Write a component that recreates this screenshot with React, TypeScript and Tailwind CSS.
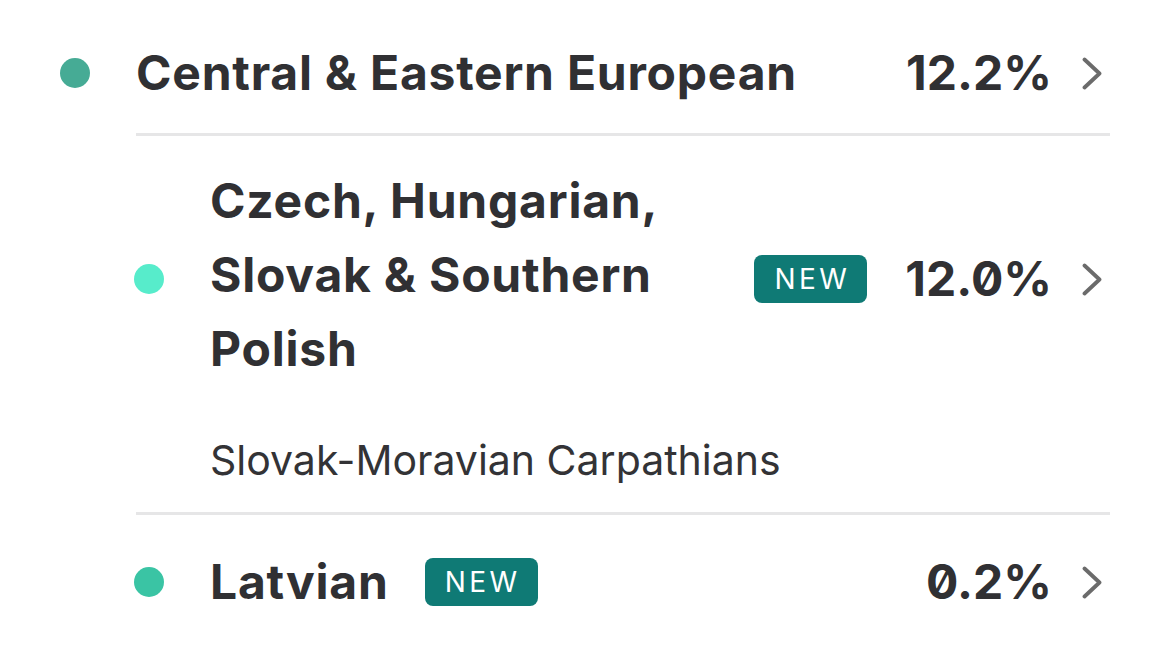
import type { ReactNode } from 'react'

const font = { fontFamily: 'Inter, "Noto Sans", sans-serif' }

function Dot({ color }: { color: string }) {
  return <span className={`block h-[30px] w-[30px] shrink-0 rounded-full ${color}`} />
}

function NewBadge() {
  return (
    <span className="flex h-[48px] w-[113px] shrink-0 items-center justify-center rounded-[8px] bg-[#0f7a75] pl-[3px] text-[28px] font-normal tracking-[0.12em] text-white">
      NEW
    </span>
  )
}

function Chevron() {
  return (
    <svg width="20" height="33" viewBox="0 0 20 33" className="ml-[30px] mr-[8px] shrink-0" fill="none">
      <polyline points="2.5,2.5 17.5,16.5 2.5,30.5" stroke="#6b6b6b" strokeWidth="3.8" strokeLinecap="round" strokeLinejoin="round" />
    </svg>
  )
}

function Percent({ children }: { children: ReactNode }) {
  return (
    <span className="ml-auto shrink-0 pl-[38px] text-[48px] font-bold leading-[74px] slashed-zero text-[#303033]">
      {children}
    </span>
  )
}

function Divider({ indent }: { indent: string }) {
  return <div className={`${indent} h-[3px] bg-[#e6e6e7]`} />
}

const nameClasses = 'text-[48px] font-bold leading-[74px] tracking-[0.016em]'

export default function App() {
  return (
    <div className="min-h-[658px] bg-white px-[60px] pt-[36px] text-[#303033]" style={font}>
      {/* top level population */}
      <div className="flex items-center">
        <Dot color="bg-[#46ab95]" />
        <span className={`ml-[46px] ${nameClasses}`}>Central &amp; Eastern European</span>
        <Percent>12.2%</Percent>
        <Chevron />
      </div>
      <Divider indent="ml-[76px] mt-[23px]" />

      {/* sub population */}
      <div className="pl-[74px] pt-[28px]">
        <div className="flex items-center">
          <Dot color="bg-[#57eccb]" />
          <span className={`mb-[8px] ml-[46px] min-w-0 ${nameClasses}`}>
            Czech, Hungarian, Slovak &amp; Southern Polish
          </span>
          <span className="ml-[36px] flex shrink-0">
            <NewBadge />
          </span>
          <Percent>12.0%</Percent>
          <Chevron />
        </div>
        <p className="ml-[76px] mt-[42px] text-[41px] font-normal leading-[48px] text-[#333336]">
          Slovak-Moravian Carpathians
        </p>
        <Divider indent="ml-[2px] mt-[28px]" />

        <div className="flex items-center pt-[30px]">
          <Dot color="bg-[#3ac4a4]" />
          <span className={`ml-[46px] ${nameClasses}`}>Latvian</span>
          <span className="ml-[36px] flex shrink-0">
            <NewBadge />
          </span>
          <Percent>0.2%</Percent>
          <Chevron />
        </div>
      </div>
    </div>
  )
}
